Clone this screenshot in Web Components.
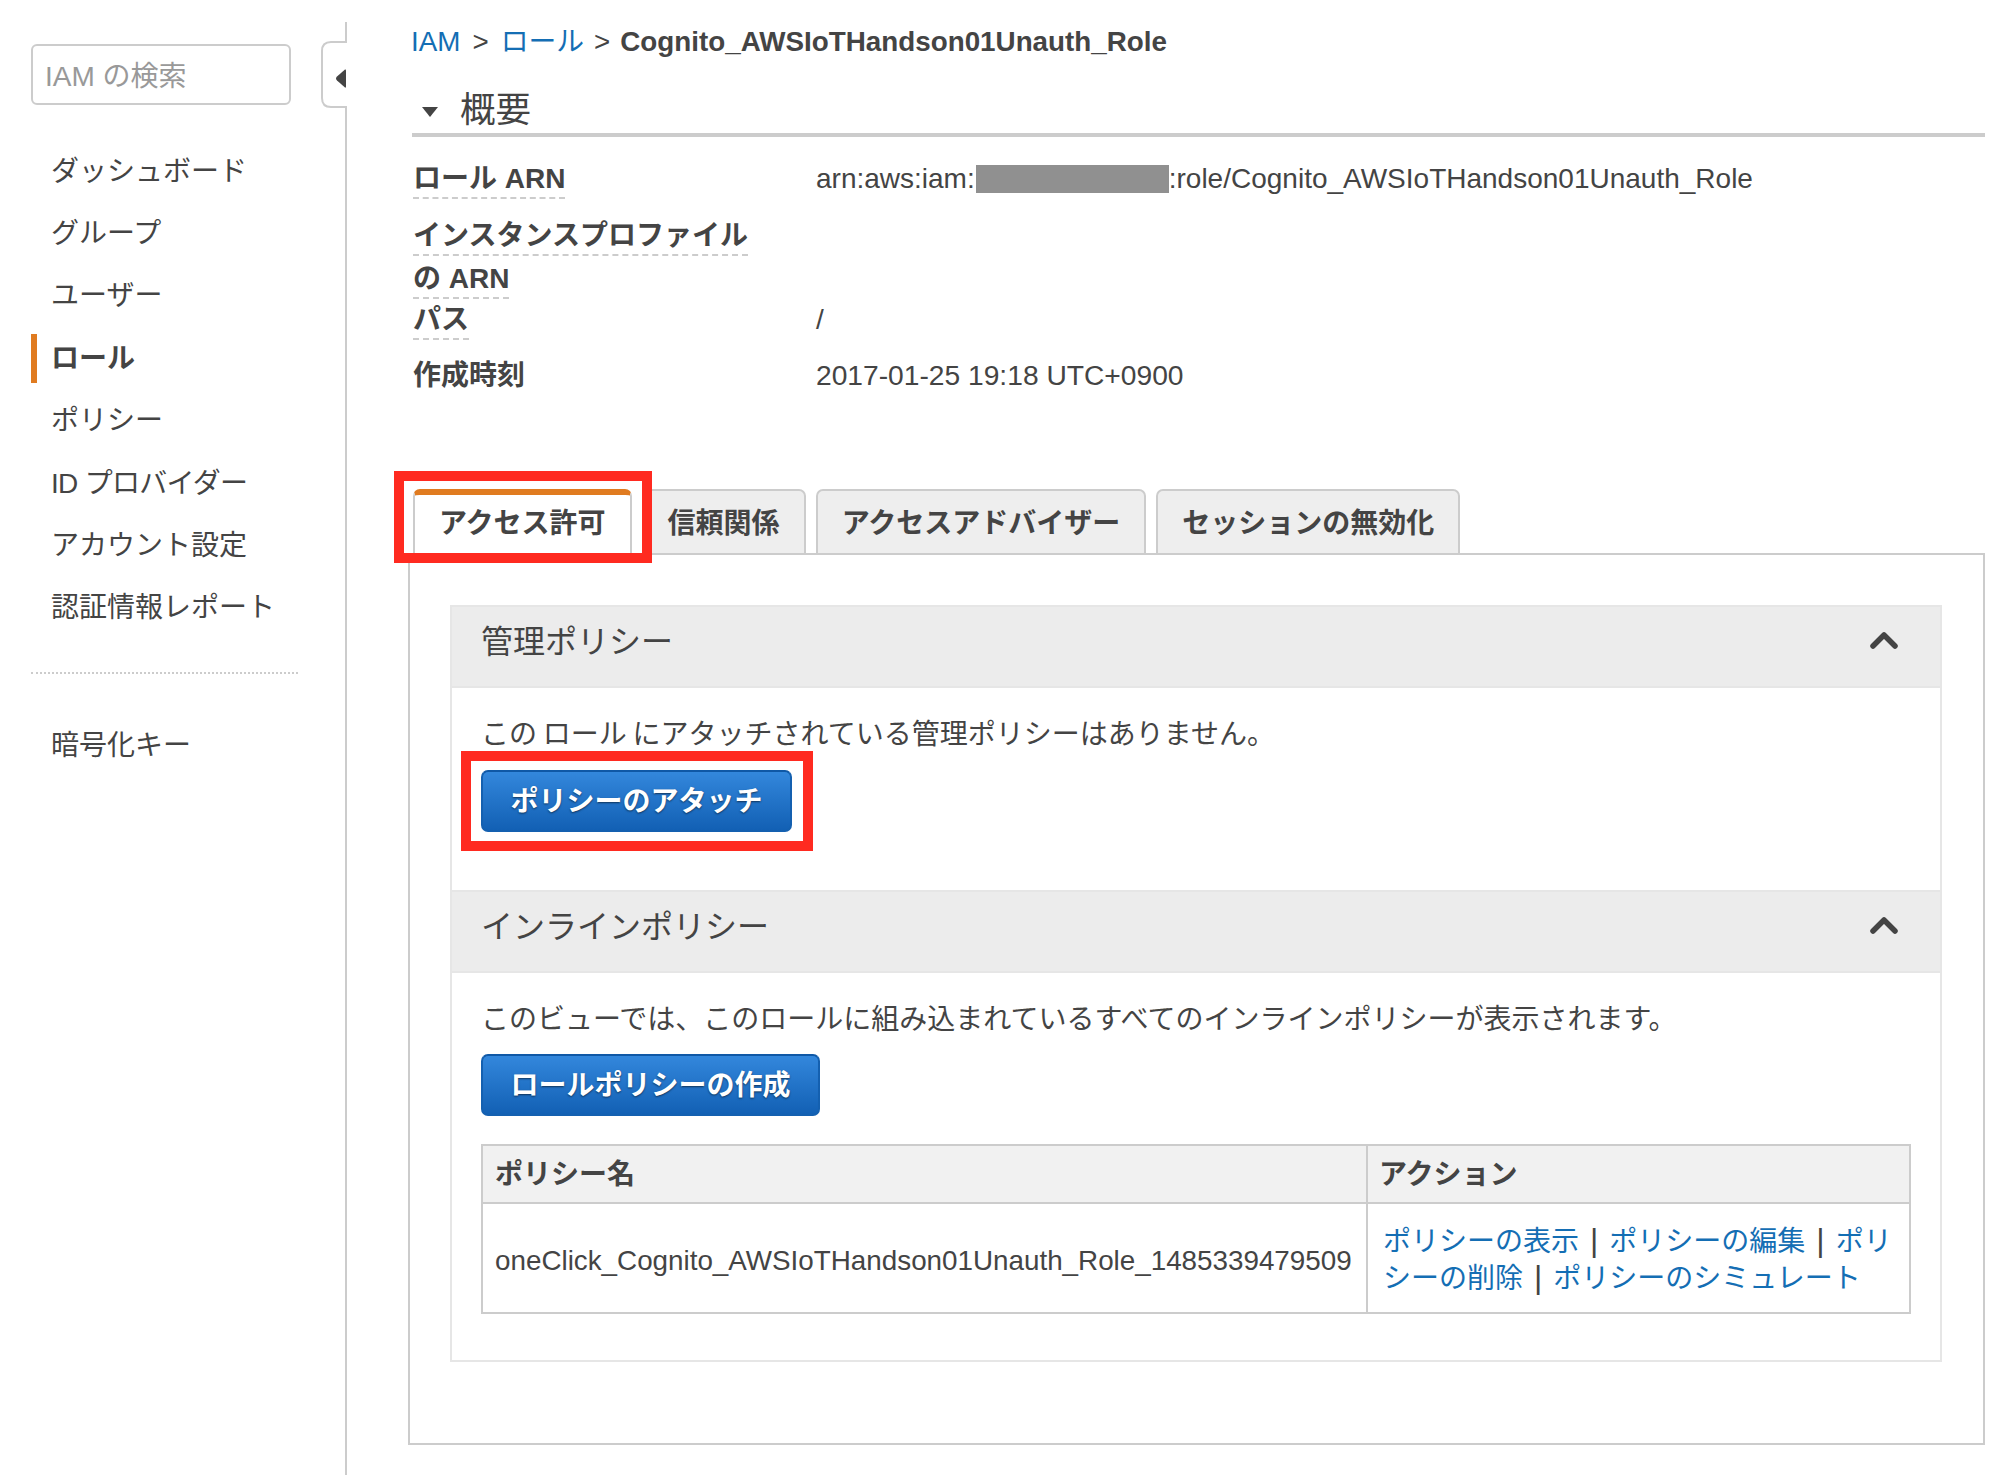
<!DOCTYPE html>
<html lang="ja">
<head>
<meta charset="utf-8">
<title>IAM ロール</title>
<style>
  html, body { margin: 0; padding: 0; background: #fff; }
  body { font-family: "Liberation Sans", "Noto Sans CJK JP", sans-serif; color: #444; }
</style>
</head>
<body>
<iam-page>
  <iam-sidebar slot="side">
    <side-link>ダッシュボード</side-link>
    <side-link>グループ</side-link>
    <side-link>ユーザー</side-link>
    <side-link active>ロール</side-link>
    <side-link>ポリシー</side-link>
    <side-link style="letter-spacing:-.7px">ID プロバイダー</side-link>
    <side-link>アカウント設定</side-link>
    <side-link>認証情報レポート</side-link>
    <side-link slot="extra">暗号化キー</side-link>
  </iam-sidebar>

  <bread-crumb current="Cognito_AWSIoTHandson01Unauth_Role"></bread-crumb>
  <summary-head>概要</summary-head>
  <summary-row label="ロール ARN" h="57"><span>arn:aws:iam:<red-acted></red-acted>:role/Cognito_AWSIoTHandson01Unauth_Role</span></summary-row>
  <summary-row label="インスタンスプロファイルの ARN" h="84"></summary-row>
  <summary-row label="パス" h="56">/</summary-row>
  <summary-row plain label="作成時刻" h="43"><span style="font-size:28.2px">2017-01-25 19:18 UTC+0900</span></summary-row>

  <tab-bar>
    <call-out><tab-item active>アクセス許可</tab-item></call-out>
    <tab-item>信頼関係</tab-item>
    <tab-item>アクセスアドバイザー</tab-item>
    <tab-item>セッションの無効化</tab-item>
  </tab-bar>

  <tab-body>
    <policy-panel title="管理ポリシー" first>
      <body-text>この ロール にアタッチされている管理ポリシーはありません。</body-text>
      <call-out class="btn"><blue-button>ポリシーのアタッチ</blue-button></call-out>
      <div style="height:58px"></div>
    </policy-panel>
    <policy-panel title="インラインポリシー">
      <body-text>このビューでは、このロールに組み込まれているすべてのインラインポリシーが表示されます。</body-text>
      <blue-button>ロールポリシーの作成</blue-button>
      <policy-table>
        <span slot="name">oneClick_Cognito_AWSIoTHandson01Unauth_Role_1485339479509</span>
        <action-link>ポリシーの表示</action-link><link-sep></link-sep><action-link>ポリシーの編集</action-link><link-sep></link-sep><action-link>ポリ<br>シーの削除</action-link><link-sep></link-sep><action-link>ポリシーのシミュレート</action-link>
      </policy-table>
    </policy-panel>
  </tab-body>
</iam-page>

<script>
class Shadowed extends HTMLElement {
    constructor() {
        super();
        this.attachShadow({ mode: 'open' });
    }
    connectedCallback() {
        this.shadowRoot.innerHTML = this.markup();
    }
}

class IamPage extends Shadowed {
    markup() {
        return `<style>
            :host { display: flex; width: 2012px; min-height: 1475px; box-sizing: border-box; }
            main { margin-left: 65px; width: 1573px; padding-top: 22px; }
        </style>
        <slot name="side"></slot>
        <main><slot></slot></main>`;
    }
}

class IamSidebar extends Shadowed {
    markup() {
        return `<style>
            :host { display: block; position: relative; width: 345px; margin-top: 22px; height: 1453px; border-right: 2px solid #ccc; flex: none; }
            .search { box-sizing: border-box; margin: 22px 0 35px 31px; width: 260px; height: 61px; border: 2px solid #ccc; border-radius: 6px; padding: 0 12px; font-size: 28px; line-height: 62px; color: #999; }
            hr { border: 0; border-top: 2px dotted #ccc; margin: 33px 0 40px 31px; width: 267px; }
            svg { position: absolute; left: 320px; top: 19px; }
        </style>
        <div class="search">IAM の検索</div>
        <slot></slot>
        <hr>
        <slot name="extra"></slot>
        <svg width="28" height="67" viewBox="0 0 28 67">
            <path d="M27 1H11Q2 1 2 10V57Q2 66 11 66H27" fill="#fff" stroke="#ccc" stroke-width="2"/>
            <rect x="26" y="2" width="2" height="63" fill="#fff"/>
            <path d="M17 35.500 25 28.500Q26 28 26 29.500V45.500Q26 47 25 46.500L17 39.500Q15 37.500 17 35.500Z" fill="#444"/>
        </svg>`;
    }
}

class SideLink extends Shadowed {
    markup() {
        const on = this.hasAttribute('active');
        return `<style>
            :host { display: flex; align-items: center; height: 62.4px; margin-left: 31px; font-size: 28px; font-weight: ${on ? 'bold' : 'normal'}; }
            a { display: block; line-height: 49px; padding-left: 14px; border-left: 6px solid ${on ? '#e07b20' : 'transparent'}; color: #444; }
        </style><a><slot></slot></a>`;
    }
}

class BreadCrumb extends Shadowed {
    markup() {
        return `<style>
            :host { display: block; margin-left: -1px; font-size: 27.800px; line-height: 40px; white-space: nowrap; }
            a { color: #146eb4; }
            i { font-style: normal; margin: 0 12px; }
            i + a + i { margin: 0 10px; }
            b { color: #444; }
        </style><a>IAM</a><i>&gt;</i><a>ロール</a><i>&gt;</i><b>${this.getAttribute('current')}</b>`;
    }
}

class SummaryHead extends Shadowed {
    markup() {
        return `<style>
            :host { display: flex; align-items: center; box-sizing: border-box; height: 55px; padding-top: 5px; margin: 20px 0 19.500px; border-bottom: 4px solid #ccc; font-size: 35.500px; line-height: 46px; }
            svg { margin: 4px 22px 0 10px; }
        </style><svg width="16" height="10"><path d="M0 0H16L8 10Z" fill="#444"/></svg><slot></slot>`;
    }
}

class SummaryRow extends Shadowed {
    markup() {
        const plain = this.hasAttribute('plain');
        return `<style>
            :host { display: flex; height: ${this.getAttribute('h')}px; font-size: 28px; line-height: 43px; padding-left: 1px; }
            .k { width: 340px; margin-right: 63px; font-weight: bold; flex: none; }
            .k span { ${plain ? '' : 'border-bottom: 2px dashed #ccc; padding-bottom: 3px;'} }
        </style><div class="k"><span>${this.getAttribute('label')}</span></div><div><slot></slot></div>`;
    }
}

class RedActed extends Shadowed {
    markup() {
        return `<style>:host { display: inline-block; width: 193px; height: 28px; margin-left: 1px; background: #909090; vertical-align: -5px; }</style>`;
    }
}

class TabBar extends Shadowed {
    markup() {
        return `<style>
            :host { display: flex; align-items: flex-end; gap: 10px; height: 66px; margin: 92.500px 0 -2px 1px; position: relative; z-index: 1; }
        </style><slot></slot>`;
    }
}

class TabItem extends Shadowed {
    markup() {
        const on = this.hasAttribute('active');
        return `<style>
            :host { display: block; box-sizing: border-box; height: 66px; padding: 0 24px; line-height: 66px; font-size: 28px; font-weight: bold; white-space: nowrap;
                border: 2px solid #ccc; border-bottom: ${on ? '0' : '2px solid #ccc'}; border-radius: 7px 7px 0 0; background: ${on ? '#fff' : '#eee'};
                ${on ? 'border-top: 6px solid #e07b20; line-height: 58px;' : ''} }
        </style><slot></slot>`;
    }
}

// red annotation frame drawn on the screenshot, lies over whatever it wraps
class CallOut extends Shadowed {
    markup() {
        const btn = this.classList.contains('btn');
        return `<style>
            :host { display: block; position: relative; width: fit-content; ${btn ? 'margin-top: 14px;' : ''} }
            u { position: absolute; border: 10px solid #ff2a20; pointer-events: none; z-index: 2;
                ${btn ? 'left: -20px; right: -21px; top: -19px; bottom: -19px;' : 'left: -19px; right: -20px; top: -18px; bottom: -8px;'} }
        </style><slot></slot><u></u>`;
    }
}

class TabBody extends Shadowed {
    markup() {
        return `<style>
            :host { display: block; box-sizing: border-box; margin-left: -4px; width: 1577px; height: 892px; border: 2px solid #ccc; padding: 50px 41px 0 40px; }
            div { border: 2px solid #e6e6e6; border-top: 0; height: 757px; box-sizing: border-box; }
        </style><div><slot></slot></div>`;
    }
}

class PolicyPanel extends Shadowed {
    markup() {
        return `<style>
            :host { display: block; }
            header { display: flex; justify-content: space-between; align-items: center; box-sizing: border-box; height: 83px; background: #ececec;
                border-top: 2px solid #e6e6e6; border-bottom: 2px solid #e6e6e6; padding: 0 42px 15px 29px; font-size: 32px; }
            svg { display: block; margin-top: 2px; }
            section { padding: 25px 29px 0; }
        </style>
        <header><span>${this.getAttribute('title')}</span>
            <svg width="28" height="18" viewBox="0 0 28 18"><path d="M3 15 14 4 25 15" fill="none" stroke="#444" stroke-width="5.500" stroke-linecap="round" stroke-linejoin="round"/></svg>
        </header>
        <section><slot></slot></section>`;
    }
}

class BodyText extends Shadowed {
    markup() {
        return `<style>:host { display: block; font-size: 28px; line-height: 43px; word-spacing: -2px; white-space: nowrap; }</style><slot></slot>`;
    }
}

class BlueButton extends Shadowed {
    markup() {
        return `<style>
            :host { display: block; width: fit-content; box-sizing: border-box; height: 62px; padding: 0 27.500px; margin-top: 13px; line-height: 60px; font-size: 28px; font-weight: bold; color: #fff;
                text-shadow: 0 1px 2px rgba(0,0,0,.55); white-space: nowrap; border: 2px solid #1460b0; border-top-color: #0f58a6; border-radius: 7px; background: linear-gradient(#3387dc, #1260b4); }
        </style><slot></slot>`;
    }
}

class PolicyTable extends Shadowed {
    markup() {
        return `<style>
            :host { display: grid; grid-template-columns: 885px 1fr; grid-template-rows: 58px 108px; margin-top: 28px; border: 2px solid #ccc; box-sizing: border-box; width: 1430px; height: 170px; font-size: 28px; }
            .h { background: #f1f1f1; font-weight: bold; border-bottom: 2px solid #ccc; padding-bottom: 4px; box-sizing: border-box; }
            .c { display: flex; align-items: center; padding-left: 12px; }
            .l { border-right: 2px solid #ccc; }
            .h2 { padding-left: 11px; }
            .n { font-size: 27.800px; padding-top: 6px; box-sizing: border-box; }
            .a2 { padding-left: 15px; padding-top: 4px; box-sizing: border-box; line-height: 37px; }
        </style>
        <div class="c h l">ポリシー名</div><div class="c h h2">アクション</div>
        <div class="c l n"><slot name="name"></slot></div>
        <div class="c a2"><div><slot></slot></div></div>`;
    }
}

class ActionLink extends Shadowed {
    markup() {
        return `<style>:host { color: #146eb4; }</style><slot></slot>`;
    }
}

// pipe between the table's action links
class LinkSep extends Shadowed {
    markup() {
        return `<style>:host { margin: 0 11px; color: #444; font-size: 32px; line-height: 1; }</style>|`;
    }
}

const elements = {
    'iam-page': IamPage, 'iam-sidebar': IamSidebar, 'side-link': SideLink, 'bread-crumb': BreadCrumb,
    'summary-head': SummaryHead, 'summary-row': SummaryRow, 'red-acted': RedActed, 'tab-bar': TabBar,
    'tab-item': TabItem, 'call-out': CallOut, 'tab-body': TabBody, 'policy-panel': PolicyPanel,
    'body-text': BodyText, 'blue-button': BlueButton, 'policy-table': PolicyTable, 'action-link': ActionLink,
    'link-sep': LinkSep
};
for (const name in elements) customElements.define(name, elements[name]);
</script>
</body>
</html>
